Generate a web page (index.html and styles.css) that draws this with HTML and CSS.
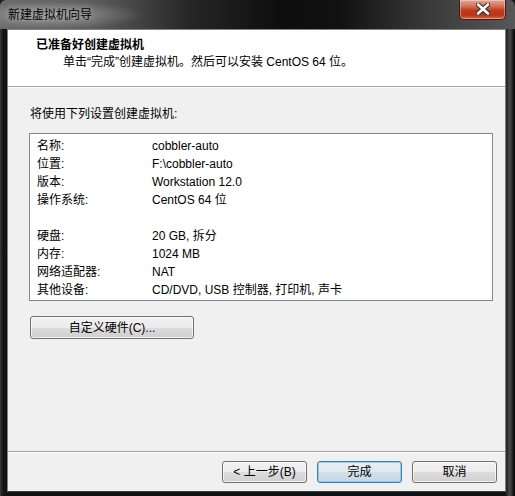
FILE: index.html
```html
<!DOCTYPE html>
<html lang="zh-CN">
<head>
<meta charset="utf-8">
<title>新建虚拟机向导</title>
<link rel="stylesheet" href="styles.css">
</head>
<body>
<div class="window">
  <div class="titlebar">
    <span class="title">新建虚拟机向导</span>
    <div class="close">
      <svg width="14" height="12" viewBox="0 0 14 12">
        <path d="M2 1.5 L12 10.5 M12 1.5 L2 10.5" stroke="#2a2a2a" stroke-width="4.6" stroke-linecap="round" fill="none"/>
        <path d="M2 1.5 L12 10.5 M12 1.5 L2 10.5" stroke="#ffffff" stroke-width="2.6" stroke-linecap="round" fill="none"/>
      </svg>
    </div>
  </div>
  <div class="client">
    <div class="header">
      <div class="h-title">已准备好创建虚拟机</div>
      <div class="h-sub">单击“完成”创建虚拟机。然后可以安装 CentOS 64 位。</div>
    </div>
    <div class="body">
      <div class="intro">将使用下列设置创建虚拟机:</div>
      <div class="listbox">
        <div class="row"><span>名称:</span><span>cobbler-auto</span></div>
        <div class="row"><span>位置:</span><span>F:\cobbler-auto</span></div>
        <div class="row"><span>版本:</span><span>Workstation 12.0</span></div>
        <div class="row"><span>操作系统:</span><span>CentOS 64 位</span></div>
        <div class="row"><span></span><span></span></div>
        <div class="row"><span>硬盘:</span><span>20 GB, 拆分</span></div>
        <div class="row"><span>内存:</span><span>1024 MB</span></div>
        <div class="row"><span>网络适配器:</span><span>NAT</span></div>
        <div class="row"><span>其他设备:</span><span>CD/DVD, USB 控制器, 打印机, 声卡</span></div>
      </div>
      <div class="custom-wrap"><button class="btn custom">自定义硬件(C)...</button></div>
    </div>
    <div class="footer">
      <button class="btn">&lt; 上一步(B)</button>
      <button class="btn default">完成</button>
      <button class="btn">取消</button>
    </div>
  </div>
</div>
</body>
</html>
```
FILE: styles.css
```css
* { box-sizing: border-box; }
html, body { margin: 0; padding: 0; background: #1a1a1a; }
body { font-family: "Liberation Sans", "Noto Sans CJK SC", sans-serif; font-size: 12px; color: #000; }

.window {
  width: 515px;
  height: 496px;
  display: flex;
  flex-direction: column;
  background:
    linear-gradient(to right, #3a3a3a 0, #151515 3px, #0f1214 7px, #0f1214 505px, #2a2a2a 507px, #4a4a4a 510px, #1a1a1a 513px, #0a0a0a 515px);
  border-radius: 6px 6px 0 0;
  overflow: hidden;
}

.titlebar {
  height: 29px;
  flex: none;
  display: flex;
  justify-content: space-between;
  align-items: flex-start;
  padding: 0 9px 0 8px;
  background:
    radial-gradient(ellipse 90px 14px at 55px 15px, rgba(190,190,190,0.55), rgba(190,190,190,0) 100%),
    linear-gradient(to right, #6c6c6c 0, #5e5e5e 90px, #262626 190px, #0e0e0e 280px, #111 340px, #3a3a3a 430px, #585858 515px);
}
.title {
  margin-top: 7px;
  line-height: 16px;
  font-size: 12px;
  color: #000;
  text-shadow: 0 0 6px rgba(255,255,255,0.5);
}
.close {
  width: 47px;
  height: 20px;
  border: 1px solid #4a1a10;
  border-top: none;
  border-radius: 0 0 5px 5px;
  background: linear-gradient(to bottom, #e3a596 0, #d4785f 30%, #c2381a 55%, #b93519 80%, #cf6b45 100%);
  box-shadow: inset 0 0 0 1px rgba(255,255,255,0.35);
  display: flex;
  align-items: center;
  justify-content: center;
}
.close svg { display: block; margin-top: -1px; }

.client {
  flex: none;
  height: 463px;
  margin: 0 9px 0 7px;
  border: 1px solid #7d8288;
  border-bottom-color: #3c3c3c;
  background: #f0f0f0;
  display: flex;
  flex-direction: column;
}

.header {
  flex: none;
  height: 57px;
  background: #fff;
  border-bottom: 1px solid #a0a0a0;
  padding: 7px 0 0 28px;
}
.h-title { font-weight: bold; line-height: 17px; }
.h-sub { line-height: 16px; padding-left: 27px; }

.body {
  flex: 1;
  padding: 18px 0 0 21px;
  border-top: 1px solid #fff;
}
.intro { line-height: 16px; padding-left: 1px; }
.listbox {
  margin-top: 11px;
  width: 464px;
  height: 168px;
  border: 1px solid #82878f;
  background: #fff;
  padding: 3px 0 0 7px;
}
.row {
  display: grid;
  grid-template-columns: 115px 1fr;
  height: 18px;
  line-height: 18px;
}

.custom-wrap { margin-top: 15px; padding-left: 1px; }

.btn {
  font: inherit;
  color: #000;
  height: 22px;
  width: 85px;
  padding: 0;
  border: 1px solid #707070;
  border-radius: 3px;
  background: linear-gradient(to bottom, #f2f2f2 0, #ebebeb 50%, #dddddd 51%, #cfcfcf 100%);
  box-shadow: inset 0 0 0 1px rgba(255,255,255,0.7);
  line-height: 18px;
}
.custom { width: 164px; height: 23px; }
.default {
  border-color: #3c7fb1;
  background: linear-gradient(to bottom, #eaf6fd 0, #d9f0fc 50%, #bee6fd 51%, #a7d9f5 100%);
  box-shadow: inset 0 0 0 1px #48d0f8;
}
.default {
  background: linear-gradient(to bottom, #e8eff5 0, #e0e9f0 50%, #d2dfe9 51%, #c6d6e3 100%);
  box-shadow: inset 0 0 0 1px rgba(120,200,240,0.8);
}

.footer {
  flex: none;
  height: 40px;
  border-top: 1px solid #a0a0a0;
  display: flex;
  justify-content: flex-end;
  gap: 10px;
  padding: 9px 8px 0 0;
  box-shadow: inset 0 1px 0 #fff;
}
```
